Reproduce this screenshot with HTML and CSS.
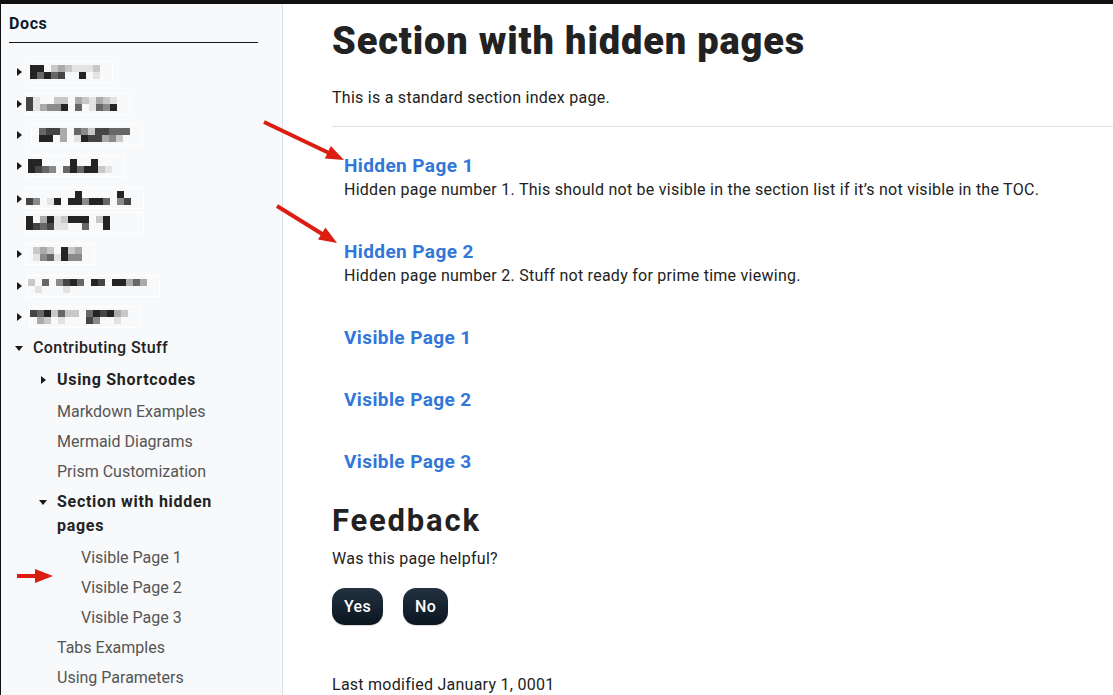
FILE: index.html
```html
<!DOCTYPE html>
<html lang="en">
<head>
<meta charset="utf-8">
<title>Section with hidden pages</title>
<link rel="stylesheet" href="styles.css">
</head>
<body>
<div class="page">
  <aside class="sidebar">
    <div class="side-title">Docs</div>
    <ul class="nav">
      <li class="row l1"><span class="caret right"></span>
        <span class="mz"><i class="a"></i><i class="a"></i><i class="a"></i><i class="c"></i><i></i><i class="a"></i><i class="f"></i><i class="c"></i><i class="e"></i><i class="b"></i><i class="f"></i><i></i><i class="g"></i><i></i><i class="g"></i><i class="a"></i><i class="g"></i><i></i><i class="f"></i><i class="g"></i></span></li>
      <li class="row l1"><span class="caret right"></span>
        <span class="mz s4"><i class="b"></i><i class="b"></i><i class="g"></i><i class="g"></i><i></i><i class="e"></i><i></i><i class="d"></i><i class="f"></i><i class="d"></i><i class="f"></i><i class="a"></i><i></i><i></i><i class="e"></i><i class="c"></i><i class="f"></i><i></i><i class="g"></i><i class="g"></i><i class="e"></i><i class="c"></i><i class="f"></i><i class="d"></i><i class="g"></i><i class="a"></i></span></li>
      <li class="row l1"><span class="caret right"></span>
        <span class="mz s2"><i></i><i></i><i class="c"></i><i class="a"></i><i class="b"></i><i class="a"></i><i class="b"></i><i></i><i class="e"></i><i class="e"></i><i></i><i></i><i class="c"></i><i class="g"></i><i class="d"></i><i class="a"></i><i class="f"></i><i class="b"></i><i class="b"></i><i class="b"></i><i class="b"></i><i class="e"></i><i class="c"></i><i class="d"></i><i class="c"></i><i class="f"></i><i class="c"></i><i></i></span></li>
      <li class="row l1"><span class="caret right"></span>
        <span class="mz s3"><i class="a"></i><i class="a"></i><i class="a"></i><i class="b"></i><i></i><i class="c"></i><i></i><i class="d"></i><i></i><i></i><i></i><i class="c"></i><i class="a"></i><i class="a"></i><i></i><i class="c"></i><i></i><i class="a"></i><i class="a"></i><i class="a"></i><i></i><i class="f"></i><i></i><i class="g"></i></span></li>
      <li class="row l1 two"><span class="caret right"></span>
        <span class="mzs">
          <span class="mz s4"><i></i><i class="b"></i><i></i><i class="d"></i><i></i><i></i><i></i><i class="g"></i><i></i><i class="a"></i><i></i><i></i><i></i><i class="a"></i><i class="a"></i><i class="a"></i><i></i><i class="d"></i><i></i><i class="a"></i><i></i><i class="a"></i><i></i><i class="c"></i><i></i><i></i><i class="a"></i><i class="d"></i><i></i><i class="b"></i></span>
          <span class="mz s4"><i class="a"></i><i class="a"></i><i></i><i class="b"></i><i class="e"></i><i class="c"></i><i class="a"></i><i class="b"></i><i class="g"></i><i class="g"></i><i class="f"></i><i class="g"></i><i class="a"></i><i></i><i class="a"></i><i></i><i class="a"></i><i class="c"></i><i></i><i></i><i class="f"></i><i></i><i class="a"></i><i class="a"></i></span>
        </span></li>
      <li class="row l1"><span class="caret right"></span>
        <span class="mz s4"><i></i><i></i><i class="f"></i><i class="g"></i><i class="e"></i><i class="d"></i><i class="f"></i><i class="c"></i><i></i><i class="g"></i><i class="a"></i><i class="a"></i><i class="f"></i><i class="d"></i><i class="e"></i><i class="d"></i></span></li>
      <li class="row l1"><span class="caret right"></span>
        <span class="mz s5"><i class="f"></i><i></i><i></i><i class="g"></i><i class="c"></i><i></i><i></i><i></i><i class="d"></i><i></i><i class="b"></i><i class="g"></i><i class="a"></i><i></i><i class="c"></i><i></i><i></i><i></i><i class="a"></i><i></i><i class="b"></i><i></i><i></i><i></i><i class="a"></i><i></i><i class="a"></i><i></i><i class="e"></i><i></i><i class="c"></i><i></i><i class="e"></i><i></i></span></li>
      <li class="row l1"><span class="caret right"></span>
        <span class="mz s1"><i class="b"></i><i></i><i class="c"></i><i class="e"></i><i class="a"></i><i class="f"></i><i class="f"></i><i></i><i class="c"></i><i class="g"></i><i class="f"></i><i></i><i class="f"></i><i></i><i></i><i></i><i class="c"></i><i class="b"></i><i class="a"></i><i class="d"></i><i class="b"></i><i></i><i class="a"></i><i></i><i class="e"></i><i class="g"></i><i class="f"></i><i></i></span></li>
      <li class="row l1 strong1"><span class="caret down"></span><span class="label">Contributing Stuff</span></li>
      <li class="row l2 strong"><span class="caret right"></span><span class="label">Using Shortcodes</span></li>
      <li class="row l2 leaf gap-top"><span class="caret"></span><span class="label">Markdown Examples</span></li>
      <li class="row l2 leaf"><span class="caret"></span><span class="label">Mermaid Diagrams</span></li>
      <li class="row l2 leaf"><span class="caret"></span><span class="label">Prism Customization</span></li>
      <li class="row l2 strong active"><span class="caret down"></span><span class="label">Section with hidden pages</span></li>
      <li class="row l3 leaf"><span class="caret"></span><span class="label">Visible Page 1</span></li>
      <li class="row l3 leaf"><span class="caret"></span><span class="label">Visible Page 2</span></li>
      <li class="row l3 leaf"><span class="caret"></span><span class="label">Visible Page 3</span></li>
      <li class="row l2 leaf"><span class="caret"></span><span class="label">Tabs Examples</span></li>
      <li class="row l2 leaf"><span class="caret"></span><span class="label">Using Parameters</span></li>
    </ul>
  </aside>
  <main class="content">
    <h1 class="title">Section with hidden pages</h1>
    <p class="lead">This is a standard section index page.</p>
    <hr class="rule">
    <div class="section-index">
      <div class="entry">
        <h5 class="entry-title"><a href="#">Hidden Page 1</a></h5>
        <p class="entry-desc">Hidden page number 1. This should not be visible in the section list if it’s not visible in the TOC.</p>
      </div>
      <div class="entry">
        <h5 class="entry-title"><a href="#">Hidden Page 2</a></h5>
        <p class="entry-desc">Hidden page number 2. Stuff not ready for prime time viewing.</p>
      </div>
      <div class="entry">
        <h5 class="entry-title"><a href="#">Visible Page 1</a></h5>
      </div>
      <div class="entry">
        <h5 class="entry-title"><a href="#">Visible Page 2</a></h5>
      </div>
      <div class="entry">
        <h5 class="entry-title"><a href="#">Visible Page 3</a></h5>
      </div>
    </div>
    <h2 class="feedback-title">Feedback</h2>
    <p class="feedback-q">Was this page helpful?</p>
    <div class="buttons">
      <button class="btn">Yes</button>
      <button class="btn">No</button>
    </div>
    <p class="modified">Last modified January 1, 0001</p>
  </main>
  <svg class="annot" width="1113" height="695" viewBox="0 0 1113 695" aria-hidden="true">
    <g fill="#dc1e12" stroke="#dc1e12">
      <line x1="264" y1="122" x2="329" y2="153" stroke-width="4"/>
      <polygon stroke="none" points="344,160 324.8,158.5 330.8,145.9"/>
      <line x1="277" y1="206" x2="323" y2="234.5" stroke-width="4"/>
      <polygon stroke="none" points="337,243 318,239.5 325.4,227.5"/>
      <line x1="17" y1="576" x2="36" y2="576" stroke-width="4"/>
      <polygon stroke="none" points="53,576 35,569 35,583"/>
    </g>
  </svg>
</div>
</body>
</html>
```
FILE: styles.css
```css
* { box-sizing: border-box; }
html, body { margin: 0; padding: 0; }
body {
  font-family: Roboto, "Liberation Sans", sans-serif;
  color: #222;
  background: #fff;
  font-size: 16px;
  line-height: 24px;
}
.page {
  position: relative;
  display: flex;
  width: 1113px;
  height: 695px;
  overflow: hidden;
  border-top: 4px solid #111;
  border-left: 1px solid #111;
}
.sidebar {
  flex: 0 0 282px;
  background: #f8f9fa;
  border-right: 1px solid #dee2e6;
  padding: 10px 24px 0 8px;
}
.side-title {
  font-size: 16px;
  font-weight: 700;
  letter-spacing: 0.6px;
  color: #0b1a2b;
  line-height: 20px;
  padding-bottom: 8px;
  border-bottom: 1px solid #1a1a1a;
}
.nav {
  list-style: none;
  margin: 13.5px 0 0;
  padding: 0;
}
.row {
  display: flex;
  align-items: center;
  min-height: 31.4px;
}
.row.leaf { min-height: 30px; }
.row.gap-top { margin-top: 1.5px; }
.row.active { align-items: flex-start; padding: 3px 0 5px; }
.row.active .caret { margin-top: 10px; }
.row.l2 { padding-left: 24px; }
.row.l3 { padding-left: 48px; }
.row.two { min-height: 56.4px; align-items: flex-start; padding-top: 4.7px; }
.row.two .caret { margin-top: 8px; }
.caret {
  flex: 0 0 20px;
  display: flex;
  justify-content: center;
  margin-right: 4px;
}
.caret.right::before {
  content: "";
  border-left: 5px solid #1a1a1a;
  border-top: 4px solid transparent;
  border-bottom: 4px solid transparent;
}
.caret.down::before {
  content: "";
  border-top: 5px solid #1a1a1a;
  border-left: 4px solid transparent;
  border-right: 4px solid transparent;
}
.row.l1 > .caret { margin-right: 0; }
.label { line-height: 24px; }
.leaf .label { color: #555; }
.strong1 .label { font-weight: 500; color: #222; letter-spacing: 0.4px; }
.strong .label { font-weight: 700; color: #222; letter-spacing: 0.7px; }
.l1 .label { margin-left: 4px; }

/* pixelated (redacted) menu entries */
.mz {
  display: inline-grid;
  grid-auto-flow: column;
  grid-template-rows: 7px 7px;
  grid-auto-columns: 7px;
  border: 1px solid #fff;
  padding: 3px 12px 3px 0;
}
.mz.s2 { margin-left: 2px; }
.mz.s3 { margin-left: -2px; }
.mz.s4 { margin-left: -4px; }
.mz.s5 { margin-left: -2px; }
.mzs { display: flex; flex-direction: column; gap: 3px; }
.mz i { display: block; }
.mz .a { background: #242424; }
.mz .b { background: #454545; }
.mz .c { background: #676767; }
.mz .d { background: #8a8a8a; }
.mz .e { background: #aaaaaa; }
.mz .f { background: #c8c8c8; }
.mz .g { background: #e3e3e3; }

.content {
  flex: 1 1 auto;
  padding-left: 49px;
  min-width: 0;
  letter-spacing: 0.26px;
}
.title {
  font-size: 38px;
  font-weight: 900;
  line-height: 46px;
  margin: 14px 0 0;
  color: #222;
  letter-spacing: 0.85px;
  white-space: nowrap;
}
.lead {
  margin: 22px 0 0;
}
.rule {
  border: 0;
  border-top: 1px solid #dee2e6;
  margin: 16px 0 15px;
  height: 0;
}
.entry {
  padding: 12px 12px 26px;
}
.entry-title {
  margin: 0;
  font-size: 19px;
  line-height: 24px;
  font-weight: 700;
  letter-spacing: 0.4px;
}
.entry-title a {
  color: #3176d9;
  text-decoration: none;
}
.entry-desc {
  margin: 0 0 1px;
  line-height: 23px;
}
.feedback-title {
  font-size: 31px;
  font-weight: 700;
  letter-spacing: 1.8px;
  line-height: 37px;
  margin: 2px 0 0;
  color: #222;
}
.feedback-q {
  margin: 8px 0 0;
}
.buttons {
  display: flex;
  gap: 20px;
  margin-top: 17px;
}
.btn {
  font-family: inherit;
  font-size: 16px;
  font-weight: 500;
  letter-spacing: 0.3px;
  line-height: 24px;
  height: 37px;
  color: #fff;
  border: 0;
  border-radius: 13px;
  padding: 0 12px;
  background: linear-gradient(#233140, #0a1520);
  box-shadow: 0 1px 1px rgba(0,0,0,.15);
}
.modified {
  margin: 48px 0 0;
}
.annot {
  position: absolute;
  left: -1px;
  top: -4px;
  pointer-events: none;
}
```
